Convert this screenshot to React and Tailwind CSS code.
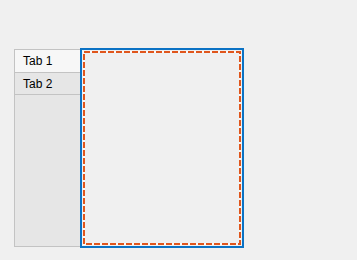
export default function App() {
  return (
    <div className="w-[357px] h-[260px] bg-[#f0f0f0] relative" style={{ fontFamily: '"Liberation Sans", Arial, sans-serif' }}>
      <div className="flex items-center pl-[14px] pt-[48px]">
        <div className="w-[66px] h-[198px] border border-r-0 border-[#c3c3c3] bg-[#e6e6e6] flex flex-col">
          <div className="h-[23px] bg-[#f7f7f7] border-b border-[#c3c3c3] text-[12px] text-black pl-[8px] flex items-center">Tab 1</div>
          <div className="h-[22px] bg-[#e6e6e6] border-b border-[#c3c3c3] text-[12px] text-black pl-[8px] flex items-center">Tab 2</div>
        </div>
        <div className="w-[164px] h-[200px] border-2 border-[#0b72c4] bg-[#f0f0f0] relative">
          <svg className="absolute left-px top-px" width="158" height="194">
            <rect x="1" y="1" width="156" height="192" fill="none" stroke="#f7f7f7" strokeWidth="2" />
            <rect x="1" y="1" width="156" height="192" fill="none" stroke="#e0561c" strokeWidth="2" strokeDasharray="6 2" />
          </svg>
        </div>
      </div>
    </div>
  );
}
